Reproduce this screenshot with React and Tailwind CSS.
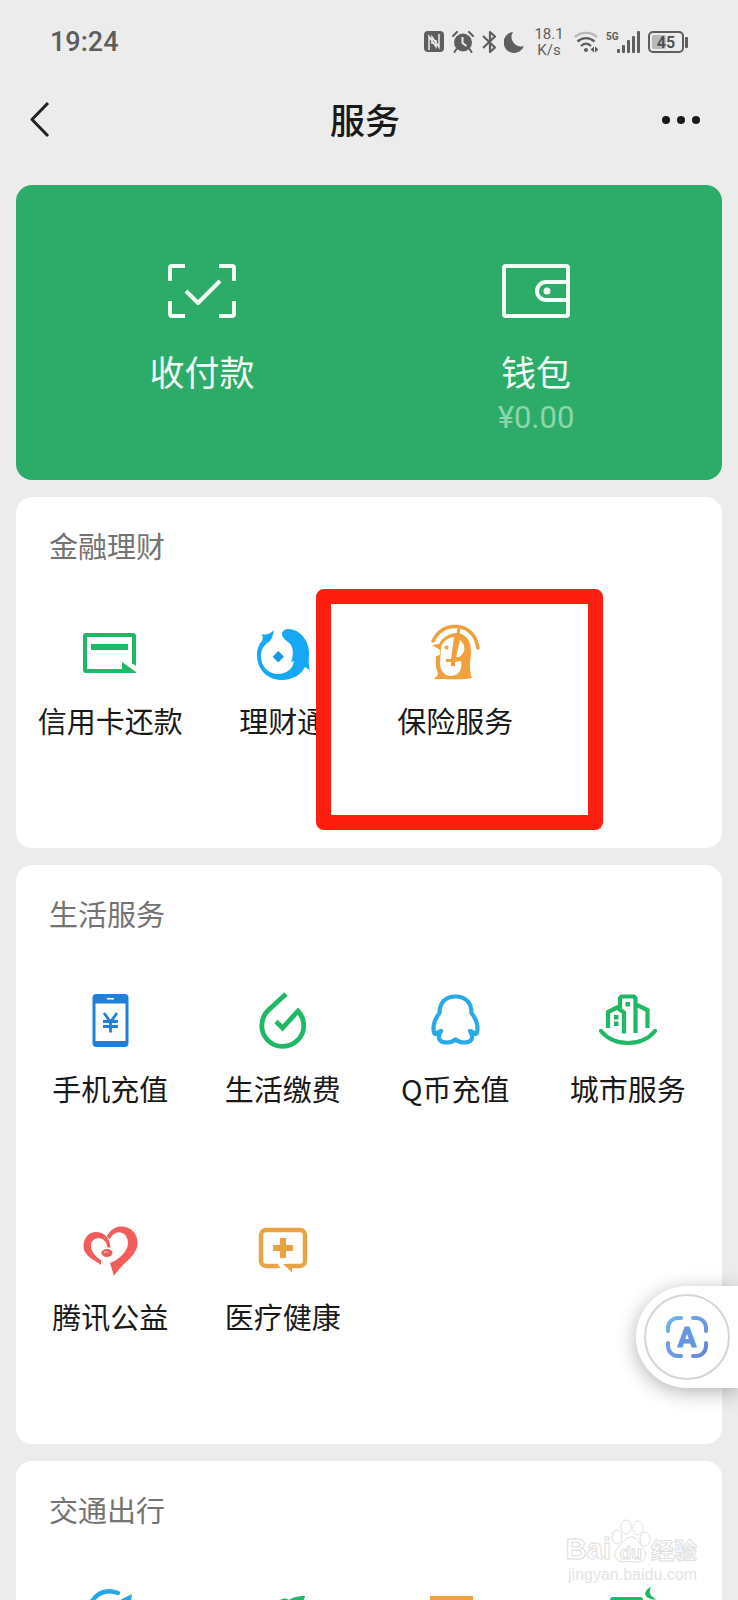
import React from "react";

function NfcIcon() {
  return (
    <svg width="20" height="22" viewBox="0 0 20 22">
      <rect x="0" y="0" width="20" height="21" rx="4" fill="#5e5e5e" />
      <path d="M5 19V5.500l7 10V9M8 13V6l7 10V3" fill="none" stroke="#ececec" strokeWidth="1.500" />
    </svg>
  );
}

function AlarmIcon() {
  return (
    <svg width="22" height="22" viewBox="0 0 22 22">
      <circle cx="11" cy="11.5" r="9" fill="#5e5e5e" />
      <path d="M1 5l4-4M21 5l-4-4M4.500 18l-2 3M17.500 18l2 3" stroke="#5e5e5e" strokeWidth="2" strokeLinecap="round" />
      <path d="M10.500 6v6l4 3" fill="none" stroke="#ececec" strokeWidth="2" />
    </svg>
  );
}

function BluetoothIcon() {
  return (
    <svg width="14" height="24" viewBox="0 0 14 24">
      <path d="M1 6l12 11.500-5 4.500V2l5 4.500L1 18" fill="none" stroke="#5e5e5e" strokeWidth="2.200" strokeLinejoin="round" />
    </svg>
  );
}

function MoonIcon() {
  return (
    <svg width="20" height="22" viewBox="0 0 20 22">
      <path d="M9 1A10.500 10.500 0 1 0 20 15 9.500 9.500 0 0 1 9 1z" fill="#5e5e5e" />
    </svg>
  );
}

function WifiIcon() {
  return (
    <svg width="24" height="22" viewBox="0 0 24 22" fill="none" strokeWidth="2.4">
      <path d="M1 6C7 .500 17 .500 23 6" stroke="#b9b9b9" />
      <path d="M3.500 10.500c5-4.500 12-4.500 17 0M7 15c3-3 7-3 10 0" stroke="#5e5e5e" />
      <circle cx="12" cy="19" r="2" fill="#5e5e5e" />
      <path d="M20 15.500v6l-3.500-3zM21 15.500v6l3.500-3z" fill="#5e5e5e" />
    </svg>
  );
}

function SignalIcon() {
  return (
    <svg width="34" height="22" viewBox="0 0 34 22" fill="#5e5e5e">
      <text x="0" y="9" fontSize="10" fontWeight="700" fontFamily="Roboto, sans-serif">
        5G
      </text>
      <rect x="11" y="18" width="3" height="4" rx="1" />
      <rect x="16" y="14" width="3" height="8" rx="1" />
      <rect x="21" y="9" width="3" height="13" rx="1" />
      <rect x="26" y="5" width="3" height="17" rx="1" />
      <rect x="31" y="0" width="3" height="22" rx="1" />
    </svg>
  );
}

function BatteryIcon() {
  return (
    <svg width="40" height="22" viewBox="0 0 40 22">
      <rect x="1" y="1" width="34" height="20" rx="4" fill="none" stroke="#5e5e5e" strokeWidth="2" />
      <rect x="4" y="4" width="14" height="14" rx="2" fill="#b9b9b9" />
      <rect x="37" y="6" width="3" height="11" rx="1" fill="#5e5e5e" />
      <text x="18" y="17" fontSize="16" fontWeight="600" textAnchor="middle" fill="#4d4d4d" fontFamily="Roboto, sans-serif">
        45
      </text>
    </svg>
  );
}

function ScanIcon() {
  return (
    <svg width="70" height="56" viewBox="0 0 70 56" fill="none" stroke="#f4fff8" strokeWidth="4">
      <path d="M18 3H5a2 2 0 0 0-2 2v13M52 3h13a2 2 0 0 1 2 2v13M18 53H5a2 2 0 0 1-2-2V38M52 53h13a2 2 0 0 0 2-2V38" />
      <path d="M19 28l12 12 22-22" strokeLinejoin="round" />
    </svg>
  );
}

function WalletIcon() {
  return (
    <svg width="70" height="56" viewBox="0 0 70 56" fill="none" stroke="#f4fff8" strokeWidth="4">
      <rect x="3" y="3" width="64" height="50" rx="2" />
      <path d="M67 19H45a9 9 0 0 0 0 18h22" />
      <circle cx="46" cy="28" r="3.500" fill="#f4fff8" stroke="none" />
    </svg>
  );
}

// every tile icon below is drawn on the same 60x60 grid
function Icon(props) {
  return (
    <svg width="60" height="60" viewBox="0 0 60 60" fill="none">
      {props.children}
    </svg>
  );
}

const icons = {
  card: (
    <Icon>
      <path d="M54 41V13a1 1 0 0 0-1-1H6a1 1 0 0 0-1 1v34a1 1 0 0 0 1 1h40" stroke="#1fb866" strokeWidth="4" />
      <path d="M11 21h37v6H11zM42 39l14 10v1H42zM52 40l4 3v-4h-4z" fill="#1fb866" />
    </Icon>
  ),
  fish: (
    <Icon>
      <path
        d="M9 11c4 1.500 8 0 12-4-1 4-1 7-4 11-6 4-9 8-9 15 0 11 8 18 17 18 8 0 15-5 16-13l-3 1c2-5 3-11 0-17-3-4-9-6-9-11 0-3 3-5 7-5 11 1 20 11 20 24 0 6-1 10 1 17l-5-3c-4 8-13 13-23 13C15 57 4 47 4 32c0-6 2-11 5-14 1-2 1-4 0-7z"
        fill="#16a8f5"
      />
      <path d="M25.300 28.500l5.200 5.200-5.200 5.200-5.200-5.200z" fill="#1597e5" stroke="#1597e5" strokeLinejoin="round" />
    </Icon>
  ),
  insurance: (
    <Icon>
      <path d="M8 18C14 6 22 3 31 3.500 43 4 51 12 53 25" stroke="#f0a13c" strokeWidth="3.500" strokeLinecap="round" />
      <path d="M7 22l7-1c4-7 10-11 18-11 10 1 14 9 14 18 0 8-3 18 1 27-8 2-18 1-38 1 1-2 4-3 4-6-3-6-2-12-2-17l4-1 0-5z" fill="#f0a13c" />
      <path d="M16 25c1-6 6-10 13-11l-3 22-5 0v3h5v4h4v-4l6-1c2 9-3 15-10 15-7 0-11-6-11-13z" fill="#fff" />
      <path d="M35 17c6 5 6 13-1 17h-3z" fill="#fff" />
      <path d="M34 5l-6 38" stroke="#f0a13c" strokeWidth="3" />
      <circle cx="21.500" cy="24.500" r="2" fill="#f0a13c" />
    </Icon>
  ),
  phone: (
    <Icon>
      <rect x="12.500" y="3" width="36" height="53" rx="4" fill="#1e80dc" />
      <path d="M15.500 12.500h30V50h-30zM27 7h7v1.500h-7z" fill="#fff" />
      <path d="M24 22l6.500 9L37 22M30.500 30v11.500M23 30.500h15M23 35.500h15" stroke="#1e80dc" strokeWidth="2.800" />
    </Icon>
  ),
  drop: (
    <Icon>
      <path d="M33 3L15 19.500A21 21 0 1 0 45 20L29.500 37 23 30.500" stroke="#1fb866" strokeWidth="4.800" />
    </Icon>
  ),
  penguin: (
    <Icon>
      <path
        d="M30.500 5.500C20 5.500 14.500 12 14.500 22c-4 5-6 11-6 16 0 5 1.500 6 3.500 4l4-2-2 4c-1 5 2 7.500 8 7.500 4 0 6-1 8.500-3 2.500 2 4.500 3 8.500 3 6 0 9-2.500 8-7.500l-2-4 4 2c2 2 3.500 1 3.500-4 0-5-2-11-6-16C46.500 12 41 5.500 30.500 5.500z"
        stroke="#27aae6"
        strokeWidth="4.200"
        strokeLinejoin="round"
      />
    </Icon>
  ),
  city: (
    <Icon>
      <path d="M3 40c13 16 41 16 54 0" stroke="#1fb866" strokeWidth="4.200" strokeLinecap="round" />
      <path d="M10 37V21l9-4.500 7 5v21M22 17V7l1.500-1.500h12.500l1.500 1.500V42M39 14l10.500 5v18" stroke="#1fb866" strokeWidth="4.200" />
      <path d="M27.500 11h4.500v4.500h-4.500zM16 24h4.500v4.500H16zM16 30.500h4.500v4.500H16z" fill="#1fb866" />
    </Icon>
  ),
  heart: (
    <Icon>
      <path d="M30.500 29C30 18 24 13 16 13 9 13 3.500 19 3.500 27c0 9 9 13 17.500 19l0-5C16 38 11 33 11 27c0-7 6-9 11-7 4 2 5 5 5 8z" fill="#f25c5c" />
      <path d="M27 17C31 10 36 7.500 41 7.500c10 0 16.500 7 16.500 16.500 0 13-13.500 18-23.500 33l-4-13c8-3 18-11 18-20 0-8-6-12-11-10.500-3 1-6 3.500-7.500 7z" fill="#f25c5c" />
      <ellipse cx="27" cy="34" rx="5.500" ry="4" fill="#f25c5c" />
      <path d="M24 33.500c2-1 3-1 4 0" stroke="#fff" strokeWidth="1" />
    </Icon>
  ),
  medical: (
    <Icon>
      <path d="M25 47H13a5 5 0 0 1-5-5V16a5 5 0 0 1 5-5h34a5 5 0 0 1 5 5v26a5 5 0 0 1-5 5H35" stroke="#eba244" strokeWidth="4.400" />
      <path d="M30 45l9 8.500V45zM24 45l4 4h-4zM27 19h6v7h7v6h-7v7h-6v-7h-7v-6h7z" fill="#eba244" />
    </Icon>
  ),
  train: (
    <Icon>
      <path d="M10 17C17 5 27 2 38 6" stroke="#27a6e5" strokeWidth="4.200" strokeLinecap="round" />
      <path d="M38 14l14-7-2 17z" fill="#27a6e5" />
    </Icon>
  ),
  leaf: (
    <Icon>
      <path d="M27 13c4-2 6-2 9 0 4-3 9-4 16-4-2 10-12 18-25 20z" fill="#1fb866" />
    </Icon>
  ),
  ticket: (
    <Icon>
      <rect x="5" y="9" width="43" height="46" rx="1" fill="#f0a13c" />
    </Icon>
  ),
  hotel: (
    <Icon>
      <rect x="12" y="10" width="33" height="46" rx="3" fill="#1fb866" />
      <path d="M53 0C45 3 44 13 59 12.500 53 10 50 6 53 0z" fill="#1fb866" />
    </Icon>
  ),
};

const sections = [
  {
    title: "金融理财",
    items: [
      { name: "信用卡还款", icon: "card" },
      { name: "理财通", icon: "fish" },
      { name: "保险服务", icon: "insurance", marked: true },
    ],
  },
  {
    title: "生活服务",
    items: [
      { name: "手机充值", icon: "phone" },
      { name: "生活缴费", icon: "drop" },
      { name: "Q币充值", icon: "penguin" },
      { name: "城市服务", icon: "city" },
      { name: "腾讯公益", icon: "heart" },
      { name: "医疗健康", icon: "medical" },
    ],
  },
  {
    title: "交通出行",
    items: [
      { name: "", icon: "train" },
      { name: "", icon: "leaf" },
      { name: "", icon: "ticket" },
      { name: "", icon: "hotel" },
    ],
  },
];

function StatusBar() {
  return (
    <div className="flex h-21 items-center justify-between px-[50px] font-[Roboto] text-[#5e5e5e]">
      <span className="text-[27px] font-medium">19:24</span>
      <div className="flex items-center gap-2">
        <NfcIcon />
        <AlarmIcon />
        <BluetoothIcon />
        <MoonIcon />
        <div className="flex w-[34px] flex-col items-center text-[15px] leading-4">
          <span>18.1</span>
          <span>K/s</span>
        </div>
        <WifiIcon />
        <SignalIcon />
        <BatteryIcon />
      </div>
    </div>
  );
}

function NavBar() {
  return (
    <header className="grid h-18 grid-cols-3 items-center pr-9 pl-7 text-[#191919]">
      <button aria-label="返回" className="w-fit">
        <svg width="22" height="36" viewBox="0 0 22 36" fill="none">
          <path d="M20 1L4 17.500 20 34" stroke="#222" strokeWidth="3" strokeLinejoin="round" />
        </svg>
      </button>
      <h1 className="pb-[3px] text-center text-[35px] leading-10 font-medium">服务</h1>
      <button aria-label="更多" className="flex w-fit gap-[7px] justify-self-end pr-[2px]">
        <span className="h-2 w-2 rounded-full bg-[#191919]"></span>
        <span className="h-2 w-2 rounded-full bg-[#191919]"></span>
        <span className="h-2 w-2 rounded-full bg-[#191919]"></span>
      </button>
    </header>
  );
}

function PayCard() {
  return (
    <section className="grid grid-cols-2 rounded-2xl bg-[#2dac69] px-[19px] pt-[78px] pb-[42px] text-[#f4fff8]">
      <button className="flex flex-col items-center">
        <ScanIcon />
        <span className="mt-8 text-[35px] leading-10">收付款</span>
      </button>
      <button className="flex flex-col items-center">
        <WalletIcon />
        <span className="mt-8 text-[35px] leading-10">钱包</span>
        <span className="mt-[7px] font-[Roboto] text-[31px] leading-10 text-[#8cd6ac]">¥0.00</span>
      </button>
    </section>
  );
}

function Section(props) {
  return (
    <section className="rounded-2xl bg-white px-2 pt-7 pb-px">
      <h2 className="mb-[54px] px-[25px] text-[29px] leading-10 text-[#737373]">{props.title}</h2>
      <div className="grid grid-cols-4">
        {props.items.map((item, i) => {
          return (
            <div className="relative h-57" key={i}>
              <button className="flex w-full flex-col items-center pt-1">
                {icons[item.icon]}
                <span className="mt-[17px] text-[29px] leading-10 whitespace-nowrap text-[#191919]">{item.name}</span>
              </button>
              {item.marked ? (
                <div className="pointer-events-none absolute -top-[30px] -right-[61px] -left-[53px] h-[241px] rounded-lg border-[15px] border-[#ff1e10]"></div>
              ) : null}
            </div>
          );
        })}
      </div>
    </section>
  );
}

function ScanButton() {
  return (
    <button
      aria-label="识别文字"
      className="absolute right-0 bottom-[212px] rounded-l-full bg-white p-2 shadow-[0_4px_20px_rgba(0,0,0,0.3)]"
    >
      <span className="flex h-[86px] w-[86px] items-center justify-center rounded-full border-2 border-[#d6d6d6]">
        <svg width="42" height="42" viewBox="0 0 42 42" fill="none">
          <defs>
            <linearGradient id="scan" x1="0" y1="0" x2="42" y2="42" gradientUnits="userSpaceOnUse">
              <stop offset="0" stopColor="#6db9ee" />
              <stop offset="1" stopColor="#6b7fd8" />
            </linearGradient>
          </defs>
          <g stroke="url(#scan)" strokeWidth="4" strokeLinecap="round">
            <path d="M15 2h-3A10 10 0 0 0 2 12v3M27 2h3a10 10 0 0 1 10 10v3M15 40h-3A10 10 0 0 1 2 30v-3M27 40h3a10 10 0 0 0 10-10v-3" />
          </g>
          <text
            x="21"
            y="31"
            fontSize="28"
            fontWeight="700"
            textAnchor="middle"
            fill="#6497e2"
            stroke="#6497e2"
            strokeLinejoin="round"
            fontFamily="Roboto, sans-serif"
          >
            A
          </text>
        </svg>
      </span>
    </button>
  );
}

function Watermark() {
  return (
    <div className="pointer-events-none absolute right-[41px] bottom-[15px] flex flex-col items-end text-white [-webkit-text-stroke:1px_#dedede]">
      <div className="flex items-end">
        <span className="font-[Liberation_Sans] text-[29px] leading-8 font-bold">Bai</span>
        <svg width="40" height="46" viewBox="0 0 40 46" fill="#fff" stroke="#dedede">
          <ellipse cx="6" cy="18" rx="5" ry="7" />
          <ellipse cx="15" cy="8" rx="5" ry="7" />
          <ellipse cx="27" cy="9" rx="5" ry="7" />
          <ellipse cx="34" cy="20" rx="5" ry="7" />
          <path d="M20 18c6 0 8 6 12 11 5 6 3 14-5 14-5 0-9-1-14 0-8 0-12-7-7-13 5-5 8-12 14-12z" />
          <text x="20" y="40" fontSize="18" fontWeight="700" textAnchor="middle" fontFamily="Liberation Sans, sans-serif">
            du
          </text>
        </svg>
        <span className="text-[23px] leading-8 font-bold">经验</span>
      </div>
      <span className="font-[Liberation_Sans] text-base leading-5 text-[#e4e4e4] [-webkit-text-stroke:0]">jingyan.baidu.com</span>
    </div>
  );
}

function App() {
  return (
    <div className="relative h-screen overflow-hidden bg-[#ececec] font-['Noto_Sans_CJK_SC',sans-serif]">
      <StatusBar />
      <NavBar />
      <main className="flex flex-col gap-[17px] px-4 pt-[29px]">
        <PayCard />
        {sections.map((s, i) => {
          return <Section title={s.title} items={s.items} key={i} />;
        })}
      </main>
      <ScanButton />
      <Watermark />
    </div>
  );
}

export default App;
